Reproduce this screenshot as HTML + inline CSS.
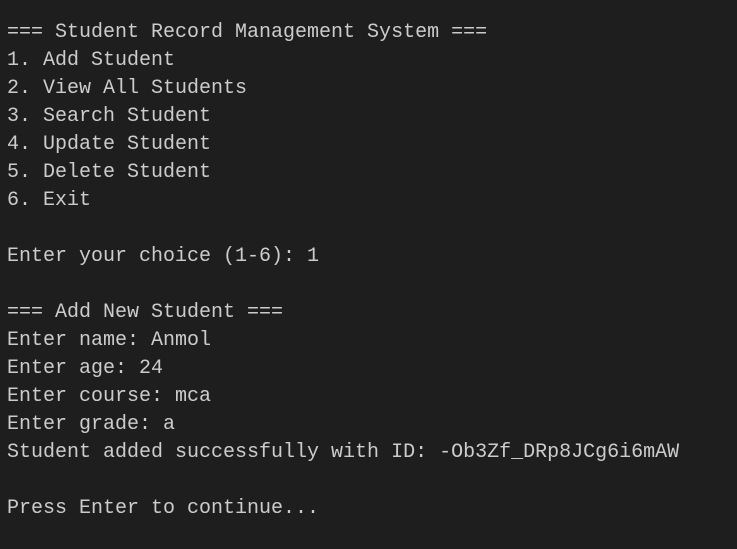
<!DOCTYPE html>
<html><head><meta charset="utf-8"><style>
html,body{margin:0;padding:0;}
body{width:737px;height:549px;background:#1e1e1e;overflow:hidden;}
pre{margin:0;padding:19px 0 0 7px;font-family:"Liberation Mono",monospace;font-size:20px;line-height:28px;color:#cccccc;}
</style></head><body><pre>=== Student Record Management System ===
1. Add Student
2. View All Students
3. Search Student
4. Update Student
5. Delete Student
6. Exit

Enter your choice (1-6): 1

=== Add New Student ===
Enter name: Anmol
Enter age: 24
Enter course: mca
Enter grade: a
Student added successfully with ID: -Ob3Zf_DRp8JCg6i6mAW

Press Enter to continue...</pre></body></html>
